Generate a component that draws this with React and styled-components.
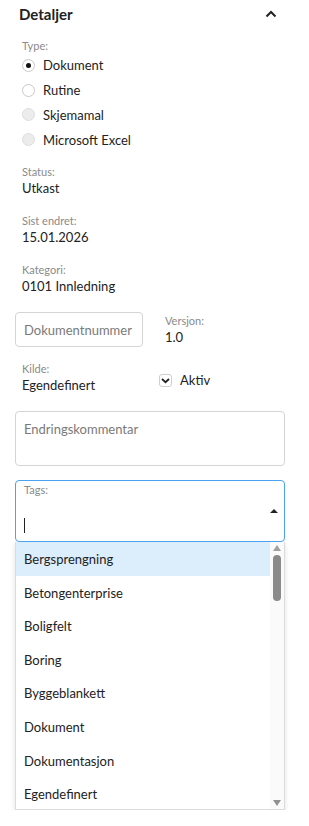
import React, { useState } from 'react'
import styled, { createGlobalStyle } from 'styled-components'

const Global = createGlobalStyle`
  body {
    margin: 0;
    background: #fff;
    font-family: "Lato", "Noto Sans", sans-serif;
    color: #222;
  }
`

const Panel = styled.div`
  width: 309px;
  padding: 0 24px 0 15px;
  box-sizing: border-box;
`

const Header = styled.div`
  display: flex;
  align-items: center;
  justify-content: space-between;
  height: 27px;
  padding: 0 8px 0 4px;
`

const Title = styled.h2`
  margin: 0;
  font-size: 15px;
  font-weight: 700;
  color: #222;
`

const Section = styled.div`
  padding-left: 7px;
  margin-top: ${p => p.$top || 0}px;
`

const Label = styled.div`
  font-size: 11px;
  color: #8a8a8a;
  line-height: 14px;
`

const Value = styled.div`
  font-size: 13px;
  color: #222;
  line-height: 17px;
  margin-top: 1px;
`

const RadioRow = styled.label`
  display: flex;
  align-items: center;
  gap: 8px;
  height: 24.8px;
  font-size: 13px;
  color: #222;
`

const RadioDot = styled.span`
  width: 13px;
  height: 13px;
  border-radius: 50%;
  box-sizing: border-box;
  border: 1px solid ${p => (p.$disabled ? '#dedede' : '#c9c9c9')};
  background: ${p => (p.$disabled ? '#ececec' : '#fff')};
  display: flex;
  align-items: center;
  justify-content: center;
  &::after {
    content: '';
    width: 5px;
    height: 5px;
    border-radius: 50%;
    background: #111;
    display: ${p => (p.$checked ? 'block' : 'none')};
  }
`

const Row = styled.div`
  display: flex;
  align-items: ${p => p.$align || 'flex-start'};
  margin-top: ${p => p.$top || 0}px;
`

const Input = styled.div`
  box-sizing: border-box;
  width: ${p => p.$w || 270}px;
  height: ${p => p.$h || 35}px;
  border: 1px solid #d4d4d4;
  border-radius: 4px;
  padding: ${p => p.$pad || '0 8px'};
  display: flex;
  align-items: ${p => p.$items || 'center'};
  font-size: 13px;
  color: #7a7a7a;
`

const Check = styled.span`
  width: 13px;
  height: 13px;
  box-sizing: border-box;
  border: 1px solid #cfcfcf;
  border-radius: 3px;
  display: flex;
  align-items: center;
  justify-content: center;
`

const CheckLabel = styled.label`
  display: flex;
  align-items: center;
  gap: 8px;
  font-size: 13px;
  color: #222;
  margin-top: 10px;
`

const TagsBox = styled.div`
  box-sizing: border-box;
  width: 270px;
  height: 62px;
  border: 1px solid #4aa3f0;
  border-radius: 4px;
  padding: 2px 8px 0;
  margin-top: 14px;
  position: relative;
`

const Caret = styled.span`
  position: absolute;
  right: 6px;
  top: 28px;
  width: 0;
  height: 0;
  border-left: 4px solid transparent;
  border-right: 4px solid transparent;
  border-bottom: 4px solid #222;
`

const Cursor = styled.span`
  display: block;
  width: 1px;
  height: 15px;
  background: #222;
  margin-top: 21px;
`

const Dropdown = styled.div`
  width: 270px;
  height: 268px;
  box-sizing: border-box;
  border: 1px solid #dcdcdc;
  border-top: none;
  box-shadow: 0 2px 5px rgba(0, 0, 0, 0.12);
  display: flex;
  overflow: hidden;
`

const List = styled.ul`
  flex: 1;
  list-style: none;
  margin: 0;
  padding: 0;
`

const Item = styled.li`
  height: 33.6px;
  display: flex;
  align-items: center;
  padding-left: 8px;
  font-size: 13px;
  color: #222;
  background: ${p => (p.$active ? '#dcedfc' : '#fff')};
`

const Track = styled.div`
  width: 14px;
  background: #fafafa;
  display: flex;
  flex-direction: column;
  align-items: center;
  padding: 3px 0;
  box-sizing: border-box;
`

const Arrow = styled.span`
  width: 0;
  height: 0;
  border-left: 4.5px solid transparent;
  border-right: 4.5px solid transparent;
  ${p => (p.$down ? 'border-top: 6px solid #909090;' : 'border-bottom: 6px solid #a0a0a0;')}
`

const Thumb = styled.span`
  width: 8px;
  height: 46px;
  border-radius: 4px;
  background: #8a8a8a;
  margin-top: 4px;
`

const Spacer = styled.span`
  flex: 1;
`

const tags = [
  'Bergsprengning',
  'Betongenterprise',
  'Boligfelt',
  'Boring',
  'Byggeblankett',
  'Dokument',
  'Dokumentasjon',
  'Egendefinert'
]

const types = [
  { name: 'Dokument', checked: true },
  { name: 'Rutine' },
  { name: 'Skjemamal', disabled: true },
  { name: 'Microsoft Excel', disabled: true }
]

export default function App() {
  const [open, setOpen] = useState(true)

  return (
    <Panel>
      <Global />
      <Header>
        <Title>Detaljer</Title>
        <svg width="12" height="8" viewBox="0 0 12 8" onClick={() => setOpen(!open)}>
          <path d="M1.5 6.5 L6 2 L10.5 6.5" fill="none" stroke="#222" strokeWidth="2" />
        </svg>
      </Header>

      <Section $top={12}>
        <Label>Type:</Label>
        {types.map(t => (
          <RadioRow key={t.name}>
            <RadioDot $checked={t.checked} $disabled={t.disabled} />
            {t.name}
          </RadioRow>
        ))}
      </Section>

      <Section $top={13}>
        <Label>Status:</Label>
        <Value>Utkast</Value>
      </Section>
      <Section $top={17}>
        <Label>Sist endret:</Label>
        <Value>15.01.2026</Value>
      </Section>
      <Section $top={17}>
        <Label>Kategori:</Label>
        <Value>0101 Innledning</Value>
      </Section>

      <Row $top={17}>
        <Input $w={128}>Dokumentnummer</Input>
        <Section $top={2} style={{ paddingLeft: 22 }}>
          <Label>Versjon:</Label>
          <Value>1.0</Value>
        </Section>
      </Row>

      <Row $top={15}>
        <Section style={{ width: 137 }}>
          <Label>Kilde:</Label>
          <Value>Egendefinert</Value>
        </Section>
        <CheckLabel>
          <Check>
            <svg width="9" height="7" viewBox="0 0 9 7">
              <path d="M1 2 L4.5 5.2 L8 2" fill="none" stroke="#222" strokeWidth="1.8" />
            </svg>
          </Check>
          Aktiv
        </CheckLabel>
      </Row>

      <Row $top={17}>
        <Input $h={55} $items="flex-start" $pad="9px 8px">Endringskommentar</Input>
      </Row>

      <TagsBox>
        <Label>Tags:</Label>
        <Caret />
        <Cursor />
      </TagsBox>

      {open && (
        <Dropdown>
          <List>
            {tags.map((t, i) => (
              <Item key={t} $active={i === 0}>{t}</Item>
            ))}
          </List>
          <Track>
            <Arrow />
            <Thumb />
            <Spacer />
            <Arrow $down />
          </Track>
        </Dropdown>
      )}
    </Panel>
  )
}
